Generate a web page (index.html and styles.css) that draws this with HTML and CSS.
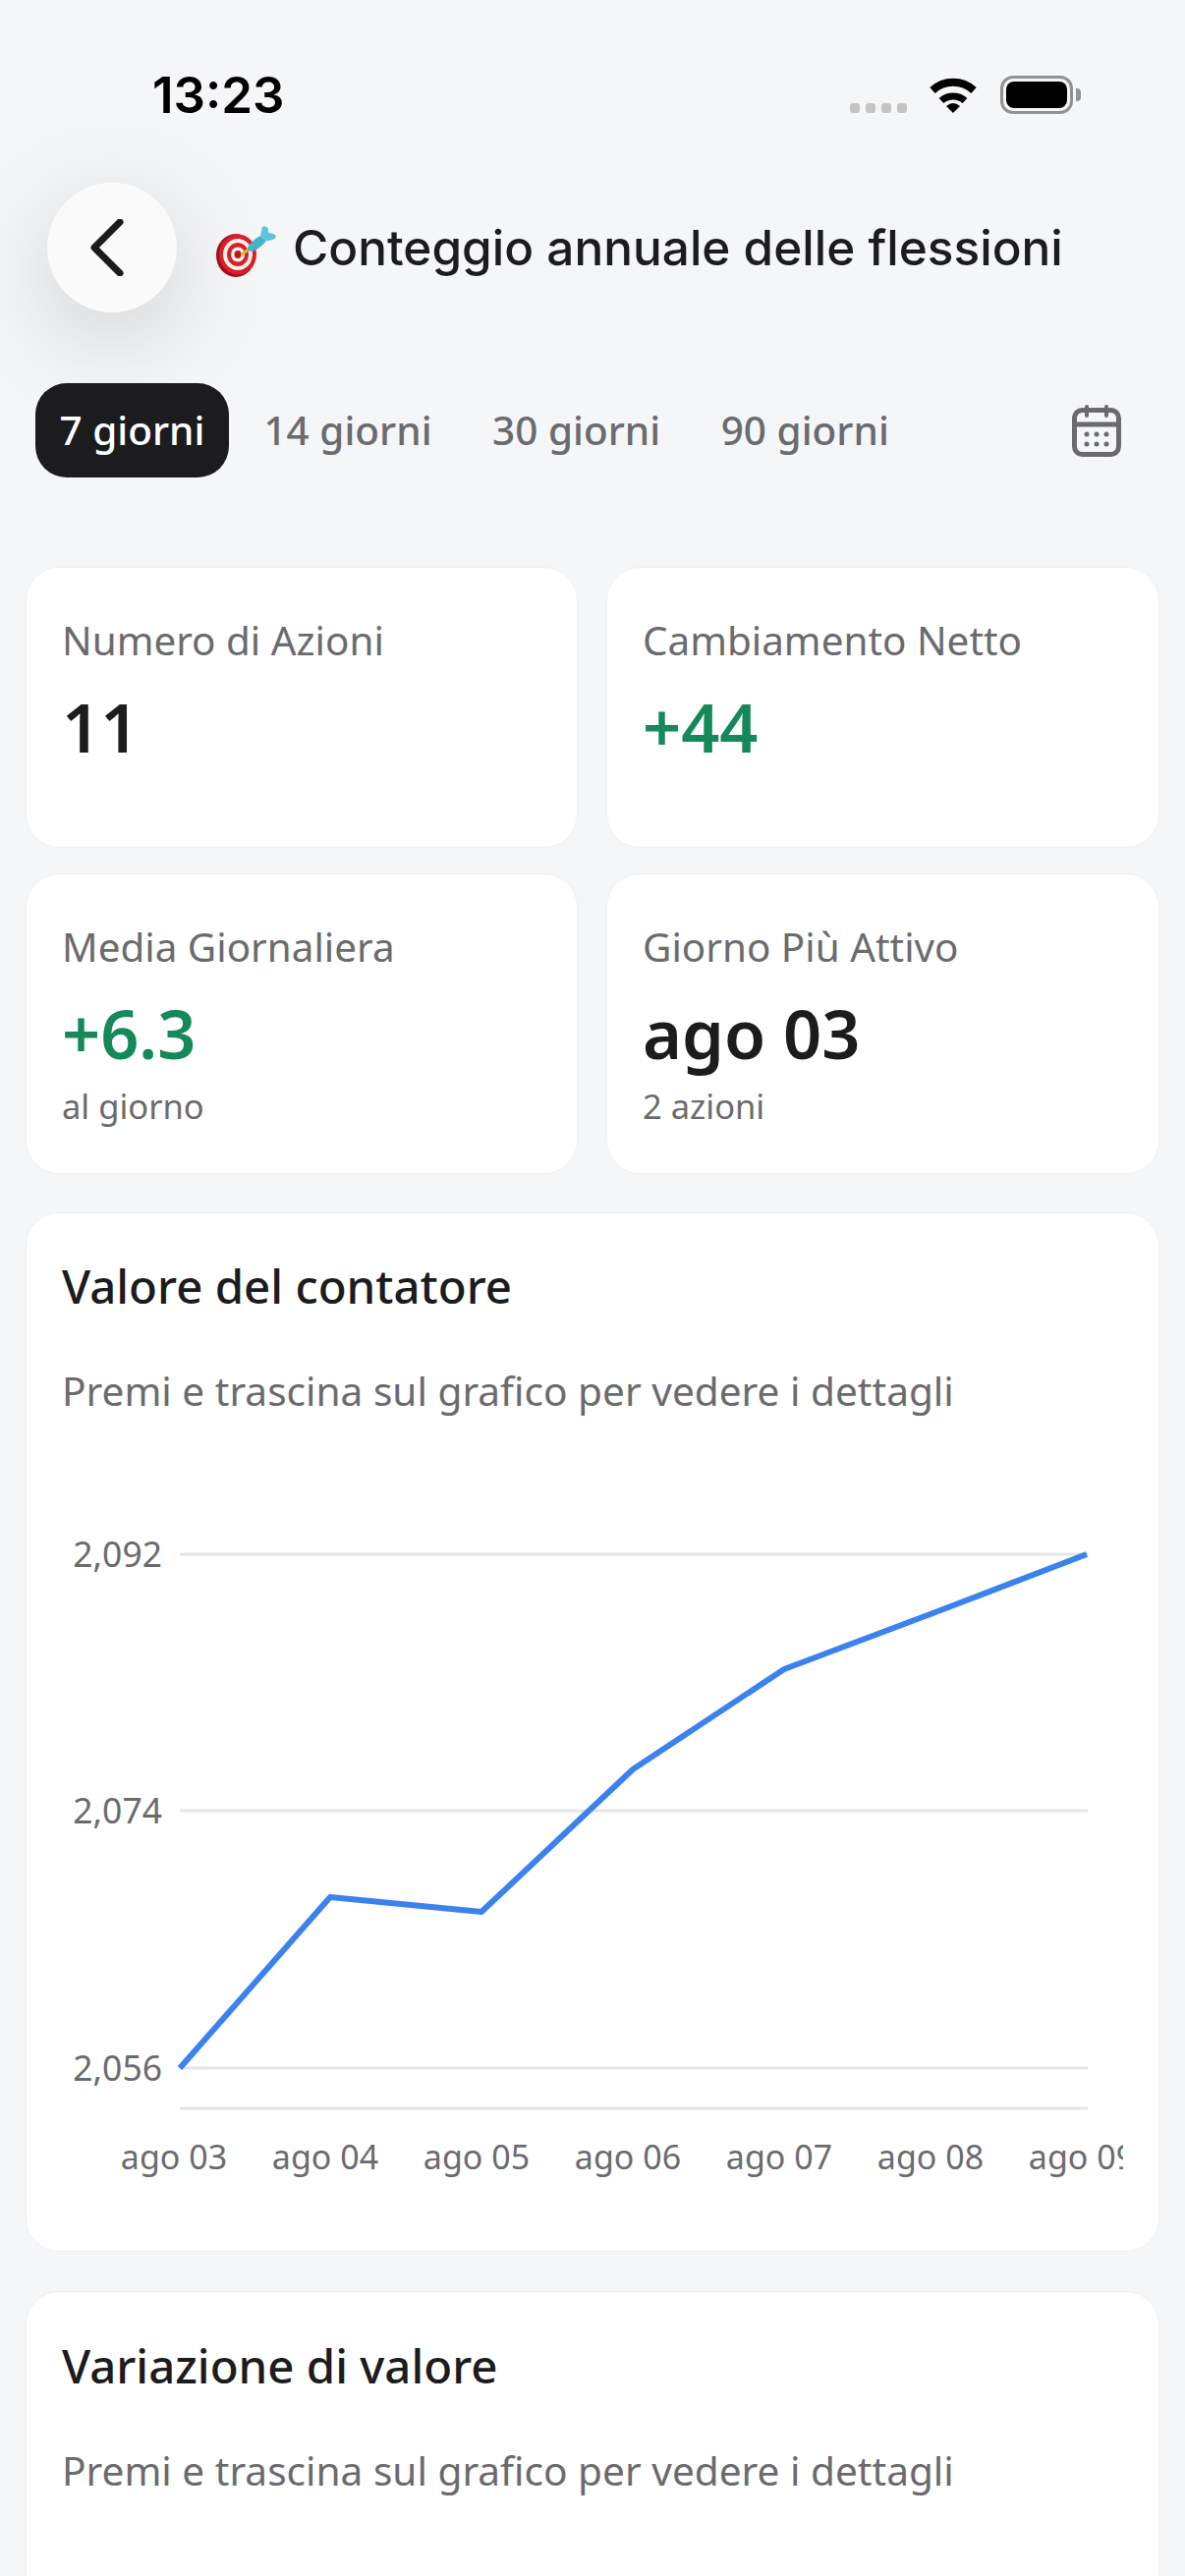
FILE: index.html
```html
<!DOCTYPE html>
<html>
<head>
	<meta charset="utf-8">
	<link rel="stylesheet" href="styles.css">
	<title>Conteggio annuale delle flessioni</title>
</head>
<body>
	<div class="status">
		<span class="time">13:23</span>
		<div class="status-icons">
			<div class="signal"><i></i><i></i><i></i><i></i></div>
			<svg class="wifi" width="50" height="38" viewBox="0 0 50 38">
				<path d="M4 14A31 31 0 0 1 46 14" fill="none" stroke="#000" stroke-width="8"/>
				<path d="M13 24.500A18 18 0 0 1 37 24.500" fill="none" stroke="#000" stroke-width="7"/>
				<path d="M18 30Q25 24 32 30L25 37Z" fill="#000"/>
			</svg>
			<div class="battery"><div class="battery-fill"></div></div>
			<div class="battery-nub"></div>
		</div>
	</div>

	<div class="header">
		<div class="back">
			<svg width="34" height="58" viewBox="0 0 34 58">
				<path d="M30 3L4 29L30 55" fill="none" stroke="#1c1c1e" stroke-width="7" stroke-linecap="round" stroke-linejoin="round"/>
			</svg>
		</div>
		<svg class="target" width="64" height="58" viewBox="0 0 64 58">
			<ellipse cx="21" cy="35" rx="20" ry="22" fill="#a30e16"/>
			<ellipse cx="23" cy="34" rx="19" ry="20.500" fill="#db1f26"/>
			<ellipse cx="23" cy="34" rx="15" ry="16" fill="#f8f2f0"/>
			<ellipse cx="23" cy="34" rx="11" ry="12" fill="#db1f26"/>
			<ellipse cx="23" cy="34" rx="7" ry="7.500" fill="#f8f2f0"/>
			<ellipse cx="23" cy="34" rx="3.500" ry="4" fill="#c5131b"/>
			<path d="M27 34L36 27" stroke="#e8b22a" stroke-width="3"/>
			<path d="M32 29Q35 21 46 15L52 20Q44 30 36 31Z" fill="#45b3c8"/>
			<path d="M46 15L48 6Q52 4 54 8L54 12Q60 12 62 16Q60 20 52 20Z" fill="#5cc6d6"/>
		</svg>
		<h1 class="title">Conteggio annuale delle flessioni</h1>
	</div>

	<div class="tabs">
		<span class="tab active">7 giorni</span>
		<span class="tab">14 giorni</span>
		<span class="tab">30 giorni</span>
		<span class="tab">90 giorni</span>
		<svg class="calendar" width="50" height="53" viewBox="0 0 50 53">
			<rect x="2.500" y="5.500" width="45" height="45" rx="8" fill="none" stroke="#6b6b6e" stroke-width="5"/>
			<path d="M2.500 20H47.500" stroke="#6b6b6e" stroke-width="5"/>
			<path d="M15 2V11M35 2V11" stroke="#6b6b6e" stroke-width="4" stroke-linecap="round"/>
			<g fill="#6b6b6e">
				<circle cx="15" cy="30" r="2.500"/><circle cx="25" cy="30" r="2.500"/><circle cx="35" cy="30" r="2.500"/>
				<circle cx="15" cy="40" r="2.500"/><circle cx="25" cy="40" r="2.500"/><circle cx="35" cy="40" r="2.500"/>
			</g>
		</svg>
	</div>

	<div class="stats">
		<div class="card stat">
			<div class="label">Numero di Azioni</div>
			<div class="value">11</div>
		</div>
		<div class="card stat">
			<div class="label">Cambiamento Netto</div>
			<div class="value green">+44</div>
		</div>
		<div class="card stat">
			<div class="label">Media Giornaliera</div>
			<div class="value green">+6.3</div>
			<div class="sub">al giorno</div>
		</div>
		<div class="card stat">
			<div class="label">Giorno Più Attivo</div>
			<div class="value">ago 03</div>
			<div class="sub">2 azioni</div>
		</div>
	</div>

	<div class="card panel panel-chart">
		<h2 class="panel-title">Valore del contatore</h2>
		<p class="hint">Premi e trascina sul grafico per vedere i dettagli</p>
		<svg class="chart" width="1116" height="700" viewBox="0 0 1116 700">
			<g stroke="#e6e6e6" stroke-width="3">
				<path d="M156 42H1080"/>
				<path d="M156 303H1080"/>
				<path d="M156 565H1080"/>
				<path d="M156 606H1080"/>
			</g>
			<polyline class="chart-line" points="156,565 309,391 463,406 617,261 771,159 925,101 1079,42"/>
			<g class="axis-y">
				<text x="138" y="55">2,092</text>
				<text x="138" y="316">2,074</text>
				<text x="138" y="578">2,056</text>
			</g>
			<g class="axis-x">
				<text x="150" y="668">ago 03</text>
				<text x="304" y="668">ago 04</text>
				<text x="458" y="668">ago 05</text>
				<text x="612" y="668">ago 06</text>
				<text x="766" y="668">ago 07</text>
				<text x="920" y="668">ago 08</text>
				<text x="1074" y="668">ago 09</text>
			</g>
		</svg>
	</div>

	<div class="card panel panel-last">
		<h2 class="panel-title">Variazione di valore</h2>
		<p class="hint">Premi e trascina sul grafico per vedere i dettagli</p>
	</div>
</body>
</html>
```

FILE: styles.css
```css
html {
	height: 100%
}

body {
	margin: 0;
	height: 2622px;
	overflow: hidden;
	background-color: #f5f6f8;
	color: #1c1c1e;
	font-family: "Noto Sans", sans-serif
}

/* status bar */
.status {
	box-sizing: border-box;
	height: 160px;
	padding: 66px 106px 0 155px;
	display: flex;
	justify-content: space-between;
	align-items: flex-start
}

.time {
	font-family: Inter, sans-serif;
	font-size: 51px;
	line-height: 62px;
	font-weight: 600;
	color: #000
}

.status-icons {
	display: flex;
	align-items: flex-end;
	padding-top: 11px
}

.signal {
	display: flex;
	gap: 6px;
	margin-right: 22px;
	margin-bottom: 1px
}

.signal i {
	width: 10px;
	height: 10px;
	border-radius: 3px;
	background-color: #c4c4c4
}

.wifi {
	margin-right: 23px
}

.battery {
	box-sizing: border-box;
	width: 74px;
	height: 39px;
	border: 3px solid #929292;
	border-radius: 13px;
	padding: 3px
}

.battery-fill {
	height: 100%;
	background-color: #000;
	border-radius: 8px
}

.battery-nub {
	width: 5px;
	height: 13px;
	margin: 0 0 13px 3px;
	background-color: #929292;
	border-radius: 0 4px 4px 0
}

/* header */
.header {
	display: flex;
	align-items: center;
	margin-top: 26px;
	padding-left: 48px
}

.back {
	box-sizing: border-box;
	width: 132px;
	height: 132px;
	border-radius: 50%;
	background-color: #fafafa;
	box-shadow: 0 26px 100px rgba(0, 0, 0, 0.16);
	display: flex;
	align-items: center;
	justify-content: center;
	padding-right: 10px;
	flex: none
}

.target {
	margin-left: 39px;
	margin-top: 4px
}

.title {
	margin: 0 0 0 15px;
	font-family: Inter, sans-serif;
	font-size: 49.500px;
	line-height: 60px;
	font-weight: 500;
	white-space: nowrap
}

/* range tabs */
.tabs {
	display: flex;
	align-items: center;
	gap: 9.500px;
	margin-top: 72px;
	padding: 0 65px 0 36px;
	height: 96px
}

.tab {
	padding: 0 26px;
	height: 96px;
	line-height: 96px;
	font-size: 40.500px;
	font-weight: 500;
	color: #6b6b6e;
	border-radius: 32px;
	white-space: nowrap
}

.tab.active {
	padding: 0 24.500px;
	background-color: #1c1c1e;
	color: #fff
}

.calendar {
	margin-left: auto
}

/* cards */
.card {
	box-sizing: border-box;
	background-color: #fff;
	border: 1px solid #eff0f2;
	border-radius: 34px
}

.stats {
	display: grid;
	grid-template-columns: 562px 563px;
	grid-template-rows: 286px 306px;
	gap: 26px 29px;
	margin: 91px 26px 0
}

.stat {
	padding: 48px 36px 0
}

.label {
	font-size: 40.400px;
	line-height: 52px;
	color: #6b6b6e
}

.value {
	margin-top: 22px;
	font-size: 68.500px;
	line-height: 80px;
	font-weight: 600
}

.green {
	color: #15895a
}

.sub {
	margin-top: 12px;
	font-size: 34.500px;
	line-height: 44px;
	color: #6b6b6e
}

.panel {
	margin: 39px 26px 0;
	padding: 44px 36px 0
}

.panel-chart {
	height: 1058px
}

.panel-last {
	height: 400px;
	padding-top: 45px;
	margin-top: 40px
}

.panel-title {
	margin: 0;
	font-size: 47.400px;
	line-height: 60px;
	font-weight: 500
}

.hint {
	margin: 49px 0 0;
	font-size: 40.600px;
	line-height: 56px;
	color: #6b6b6e
}

.chart {
	display: block;
	margin: 96px 0 0 -36px
}

.chart-line {
	fill: none;
	stroke: #3b82ee;
	stroke-width: 6;
	stroke-linejoin: round
}

.chart text {
	font-family: "Noto Sans", sans-serif;
	fill: #6b6b6e
}

.axis-y text {
	font-size: 35.500px;
	text-anchor: end
}

.axis-x text {
	font-size: 34px;
	text-anchor: middle
}
```
